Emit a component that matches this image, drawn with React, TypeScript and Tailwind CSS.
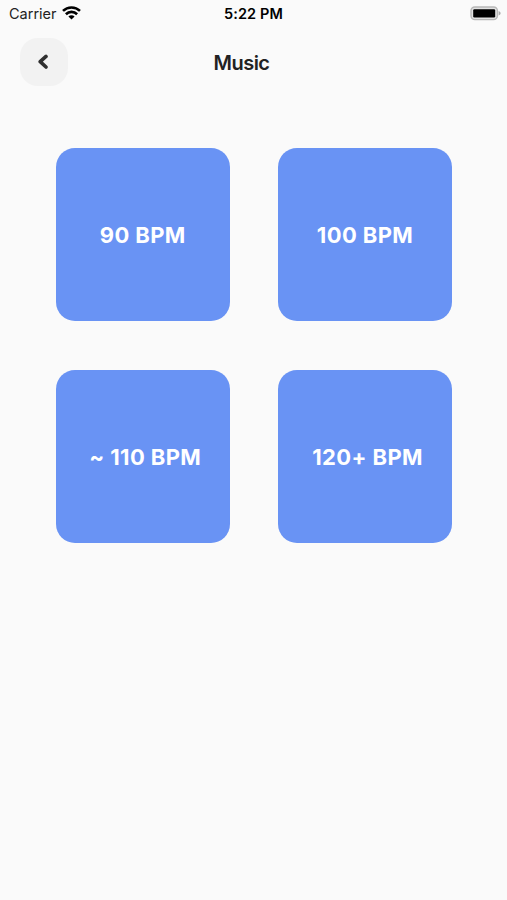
type Tempo = {
  label: string;
  className: string;
};

const tempos: Tempo[] = [
  { label: "90 BPM", className: "" },
  { label: "100 BPM", className: "" },
  { label: "~ 110 BPM", className: "pl-[5px]" },
  { label: "120+ BPM", className: "pl-[5px]" },
];

function WifiIcon() {
  return (
    <svg className="mb-[2px]" width="19" height="14" viewBox="0 0 19 14" fill="none" stroke="#000" strokeWidth="2.6">
      <path d="M1 4.9a12.2 12.2 0 0 1 17 0" />
      <path d="M3.9 8.2a8 8 0 0 1 11.2 0" />
      <path d="M9.5 13.5 6.4 10.5a4.4 4.4 0 0 1 6.2 0Z" fill="#000" stroke="none" />
    </svg>
  );
}

function BatteryIcon() {
  return (
    <svg className="mb-[2px]" width="31" height="15" viewBox="0 0 31 15">
      <rect x="1" y="1" width="26.4" height="12.6" rx="3.8" fill="#e2e2e2" stroke="#b8b8b8" strokeWidth="1.4" />
      <rect x="3.2" y="3.2" width="22" height="8.2" rx="1.2" fill="#000" />
      <path d="M28.6 5c1.3.5 2 1.3 2 2.3s-.7 1.8-2 2.3Z" fill="#aaa" />
    </svg>
  );
}

function StatusBar() {
  return (
    <div className="grid h-7 grid-cols-3 items-center pr-[6px] pl-[9px] text-black">
      <div className="flex items-center gap-[5px]">
        <span className="text-[14.5px] leading-7 text-[#222]">Carrier</span>
        <WifiIcon />
      </div>
      <span className="pr-[3px] text-center text-[14.5px] leading-7 font-semibold tracking-[0.1px]">
        5:22 PM
      </span>
      <div className="flex justify-end">
        <BatteryIcon />
      </div>
    </div>
  );
}

function Header() {
  return (
    <header className="mt-[10px] grid h-12 grid-cols-[48px_1fr_48px] items-center px-5">
      <button
        aria-label="Back"
        className="grid size-12 place-items-center rounded-[18px] bg-[#f2f2f2]"
        type="button"
      >
        <svg className="mr-[3px]" width="12" height="16" viewBox="0 0 12 16" fill="none">
          <path
            d="M9 2.4 3.2 7.7 9 13"
            stroke="#303030"
            strokeWidth="3.6"
            strokeLinecap="round"
            strokeLinejoin="round"
          />
        </svg>
      </button>
      <h1 className="pt-px pr-[24px] text-center text-xl font-semibold tracking-[-0.5px] text-[#222]">
        Music
      </h1>
    </header>
  );
}

export default function App() {
  return (
    <main className="min-h-screen bg-[#fafafa] font-['Inter',sans-serif]">
      <StatusBar />
      <Header />
      <div className="mt-[61.7px] ml-14 grid w-max grid-cols-[173.5px_173.5px] gap-[48.8px]">
        {tempos.map((tempo) => (
          <button
            key={tempo.label}
            className={`flex h-[173.5px] items-center justify-center rounded-[19px] bg-[#6993f4] pt-[2px] text-[22px] font-bold tracking-[0.4px] text-white ${tempo.className}`}
            type="button"
          >
            {tempo.label}
          </button>
        ))}
      </div>
    </main>
  );
}
